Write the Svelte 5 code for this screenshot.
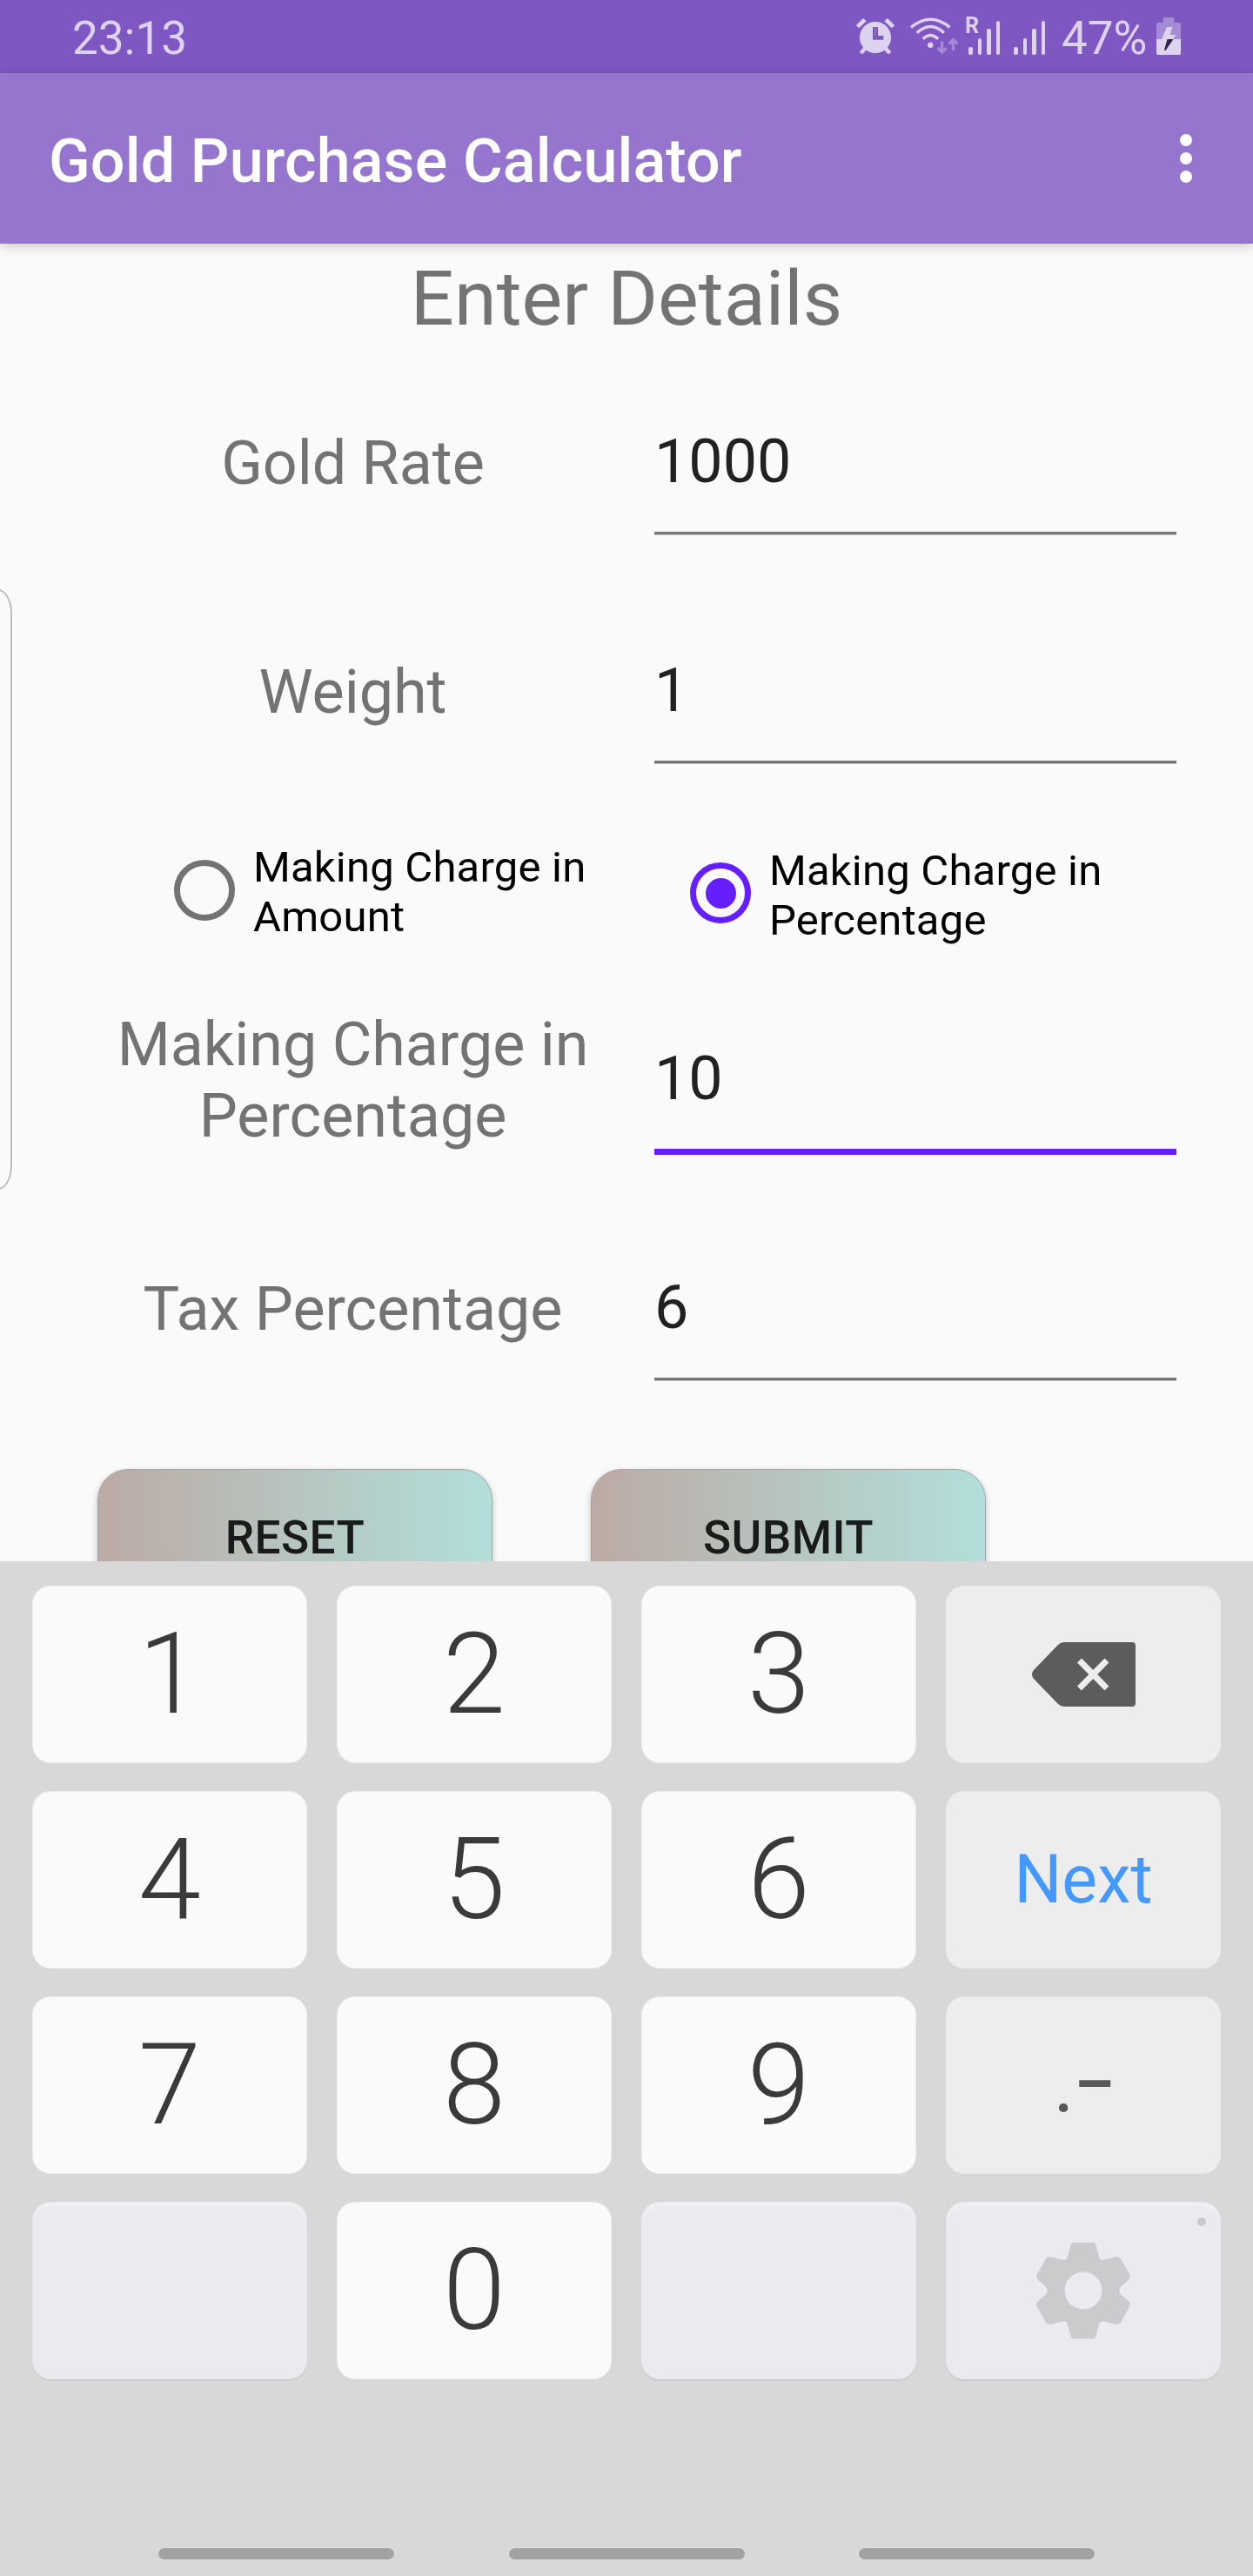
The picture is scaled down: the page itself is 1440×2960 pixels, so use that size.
<script>
  let goldRate = '1000';
  let weight = '1';
  let chargeType = 'percentage';
  let makingCharge = '10';
  let tax = '6';

  const barHeights = [9, 19, 30, 39];

  const keys = [
    { label: '1' },
    { label: '2' },
    { label: '3' },
    { type: 'backspace' },
    { label: '4' },
    { label: '5' },
    { label: '6' },
    { type: 'next' },
    { label: '7' },
    { label: '8' },
    { label: '9' },
    { type: 'symbols' },
    { type: 'blank' },
    { label: '0' },
    { type: 'blank' },
    { type: 'settings' },
  ];

  const press = (key) => {
    if (key.label) {
      makingCharge += key.label;
    } else if (key.type === 'backspace') {
      makingCharge = makingCharge.slice(0, -1);
    }
  };

  const reset = () => {
    goldRate = '';
    weight = '';
    makingCharge = '';
    tax = '';
  };
</script>

<div class="screen">
  <header class="status-bar">
    <span class="time">23:13</span>
    <div class="status-icons">
      <svg class="alarm" width="46" height="48" viewBox="0 0 46 48">
        <circle cx="23" cy="25" r="18" />
        <path d="M.7 11.3 9 3l3.7 3.3-8.4 8zM45.3 11.3 37 3l-3.7 3.3 8.4 8z" />
        <path class="line" d="M12 37l-5.6 6M34 37l5.6 6" stroke-width="4.6" />
        <path class="cut" d="M20 13h6v10h6.3v4.8H20z" />
        <path d="M22.3 14h1.2v9h-1.2z" opacity=".25" />
      </svg>
      <svg class="wifi" width="57" height="48" viewBox="0 0 57 48">
        <path class="line" d="M2 13.4Q24.3-4.8 46.6 13.4M8.8 19.8Q24.3 5.3 40 19.8M15.6 26.8Q24.3 18.4 33.2 26.8" stroke-width="3.3" />
        <circle cx="24.3" cy="33.8" r="3.2" />
        <path class="faint" d="M37.6 29.6V42M32.8 37.2l4.8 5 4.8-5M50.4 40V27.5M45.4 32.6l5-5 5 5" stroke-width="3.2" />
      </svg>
      <div class="signal">
        <span class="roaming">R</span>
        {#each barHeights as h}
          <i style="height: {h}px"></i>
        {/each}
      </div>
      <div class="signal second">
        {#each barHeights as h}
          <i style="height: {h}px"></i>
        {/each}
      </div>
      <span class="percent">47%</span>
      <svg class="battery" width="28" height="43" viewBox="0 0 28 43">
        <path d="M9 0h10q1.500 0 1.500 1.500V6H26q2 0 2 2v17H0V8q0-2 2-2h5.500V1.500Q7.500 0 9 0z" fill="#a58bd5" />
        <path d="M0 25h28v16q0 2-2 2H2q-2 0-2-2z" />
        <path d="M12 11h6.500l-2.800 9h6.800l-3.500 5H6z" />
        <path d="M12.500 25h7L10.500 38 9 37.500z" fill="#2d2440" />
      </svg>
    </div>
  </header>

  <div class="app-bar">
    <h1>Gold Purchase Calculator</h1>
    <button class="more" aria-label="More options">
      <i></i><i></i><i></i>
    </button>
  </div>

  <main class="form">
    <h2>Enter Details</h2>

    <div class="row">
      <label for="goldRate">Gold Rate</label>
      <input id="goldRate" type="text" bind:value={goldRate} />
    </div>

    <div class="row">
      <label for="weight">Weight</label>
      <input id="weight" type="text" bind:value={weight} />
    </div>

    <div class="radios">
      <button class="radio" on:click={() => (chargeType = 'amount')}>
        <span class="circle" class:checked={chargeType === 'amount'}></span>
        <span class="radio-text">Making Charge in<br />Amount</span>
      </button>
      <button class="radio lower" on:click={() => (chargeType = 'percentage')}>
        <span class="circle" class:checked={chargeType === 'percentage'}></span>
        <span class="radio-text">Making Charge in<br />Percentage</span>
      </button>
    </div>

    <div class="row making">
      <label for="makingCharge">Making Charge in<br />{chargeType === 'amount' ? 'Amount' : 'Percentage'}</label>
      <input id="makingCharge" class="active" type="text" bind:value={makingCharge} />
    </div>

    <div class="row tax">
      <label for="tax">Tax Percentage</label>
      <input id="tax" type="text" bind:value={tax} />
    </div>

    <div class="actions">
      <button on:click={reset}>RESET</button>
      <button>SUBMIT</button>
    </div>
  </main>

  <div class="edge-handle"></div>

  <section class="keyboard">
    <div class="keys">
      {#each keys as key}
        <button class="key {key.type || 'digit'}" on:click={() => press(key)} aria-label={key.label || key.type}>
          {#if key.label}
            {key.label}
          {:else if key.type === 'backspace'}
            <svg width="119" height="74" viewBox="0 0 119 74">
              <path d="M37 0h78q4 0 4 4v66q0 4-4 4H37q-4 0-7-3L2 42q-4-5 0-10L30 3q3-3 7-3z" fill="#5c5c5c" />
              <path d="M54.500 21 86 53M86 21 54.500 53" stroke="#ededed" stroke-width="7" />
            </svg>
          {:else if key.type === 'next'}
            Next
          {:else if key.type === 'symbols'}
            <span class="dot">.</span><span class="dash">-</span>
          {:else if key.type === 'settings'}
            <svg width="110" height="112" viewBox="-55 -56 110 112">
              <path
                fill="#cacbcd"
                fill-rule="evenodd"
                d="M-10.500-55.300H10.500Q14-55.300 14.700-51.500L18-39Q19.500-34 24-35.500L37-38.600Q41-39.500 43-36.500L53-19Q54.500-16 52.500-12.500L42.500-4Q40.500 0 42.500 4L52.500 12.500Q54.500 16 53 19L43 36.500Q41 39.500 37 38.600L24 35.500Q19.500 34 18 39L14.700 51.500Q14 55.300 10.500 55.300H-10.500Q-14 55.300-14.700 51.500L-18 39Q-19.500 34-24 35.500L-37 38.600Q-41 39.500-43 36.500L-53 19Q-54.500 16-52.500 12.500L-42.500 4Q-40.500 0-42.500-4L-52.500-12.500Q-54.500-16-53-19L-43-36.500Q-41-39.500-37-38.600L-24-35.500Q-19.500-34-18-39L-14.700-51.500Q-14-55.300-10.500-55.300zM21.500 0a21.500 21.500 0 1 0-43 0a21.500 21.500 0 1 0 43 0z"
              />
            </svg>
            <i class="badge"></i>
          {/if}
        </button>
      {/each}
    </div>
    <nav class="nav-hints">
      <i></i><i></i><i></i>
    </nav>
  </section>
</div>

<style>
  :global(body) {
    margin: 0;
  }

  .screen {
    position: relative;
    display: flex;
    flex-direction: column;
    width: 1440px;
    height: 2960px;
    overflow: hidden;
    background: #fafafa;
    font-family: Roboto, sans-serif;
  }

  button {
    margin: 0;
    padding: 0;
    border: none;
    background: none;
    font-family: inherit;
    cursor: pointer;
  }

  .status-bar {
    display: flex;
    justify-content: space-between;
    height: 84px;
    box-sizing: border-box;
    padding: 0 83px 0 83px;
    background: #7e57c2;
    color: #ddd3ef;
  }

  .time,
  .percent {
    font-size: 53px;
    line-height: 88px;
  }

  .status-icons {
    display: flex;
    align-items: flex-start;
  }

  .status-icons svg {
    margin-top: 18px;
    fill: #ddd3ef;
  }

  .status-icons .line {
    fill: none;
    stroke: #ddd3ef;
  }

  .status-icons .cut {
    fill: #7e57c2;
  }

  .status-icons .faint {
    fill: none;
    stroke: #a58bd5;
  }

  .wifi {
    margin-left: 16px;
  }

  .signal {
    position: relative;
    display: flex;
    align-items: flex-end;
    gap: 6px;
    height: 63px;
    margin-left: 11px;
  }

  .signal.second {
    margin-left: 16px;
  }

  .signal i {
    width: 4.500px;
    border-radius: 2px;
    background: #ddd3ef;
  }

  .roaming {
    position: absolute;
    left: -4px;
    top: 15px;
    font-size: 25px;
    font-weight: 700;
    line-height: 29px;
  }

  .percent {
    width: 97px;
    margin-left: 19px;
    white-space: nowrap;
  }

  .status-icons .battery {
    margin-top: 20px;
    margin-left: 12px;
  }

  .app-bar {
    position: relative;
    z-index: 1;
    display: flex;
    align-items: center;
    justify-content: space-between;
    height: 196px;
    box-sizing: border-box;
    padding: 0 70px 0 56px;
    background: #9575cd;
    box-shadow: 0 3px 12px rgba(0, 0, 0, 0.2);
  }

  .app-bar h1 {
    margin: 0;
    padding-top: 6px;
    color: #fff;
    font-size: 70px;
    font-weight: 500;
    letter-spacing: 0.15px;
    line-height: 82px;
  }

  .more {
    display: flex;
    flex-direction: column;
    gap: 7px;
  }

  .more i {
    width: 14px;
    height: 14px;
    border-radius: 50%;
    background: #fff;
  }

  .form {
    height: 1514px;
    overflow: hidden;
  }

  .form h2 {
    margin: 0;
    color: #737373;
    font-size: 88px;
    font-weight: 400;
    letter-spacing: 0.1px;
    line-height: 126px;
    text-align: center;
  }

  .row {
    display: grid;
    grid-template-columns: 693px 600px;
    align-items: start;
    height: 263px;
    padding-left: 59px;
  }

  .row label {
    padding-top: 85px;
    color: #737373;
    font-size: 70px;
    line-height: 82px;
    text-align: center;
  }

  .row input {
    height: 125px;
    box-sizing: border-box;
    margin: 83px 0 0;
    padding: 0 0 40px;
    border: none;
    border-bottom: 3px solid #757575;
    border-radius: 0;
    outline: none;
    background: transparent;
    box-shadow: 0 1px 0 #bbb;
    color: #212121;
    font-family: inherit;
    font-size: 70px;
    line-height: 82px;
  }

  .radios {
    display: grid;
    grid-template-columns: 593px 1fr;
    align-items: start;
    height: 190px;
    padding-left: 200px;
  }

  .radio {
    display: flex;
    align-items: flex-start;
    gap: 21px;
    padding-top: 36px;
    text-align: left;
  }

  .radio.lower {
    padding-top: 40px;
  }

  .circle {
    display: flex;
    align-items: center;
    justify-content: center;
    width: 70px;
    height: 70px;
    box-sizing: border-box;
    margin-top: 20px;
    border: 7px solid #737373;
    border-radius: 50%;
  }

  .radio.lower .circle {
    margin-top: 19px;
  }

  .circle.checked {
    border-color: #651fff;
  }

  .circle.checked::after {
    content: '';
    width: 35px;
    height: 35px;
    border-radius: 50%;
    background: #651fff;
  }

  .radio-text {
    color: #000;
    font-size: 49px;
    letter-spacing: 0.2px;
    line-height: 57px;
  }

  .row.making {
    height: 256px;
  }

  .row.making label {
    padding-top: 37px;
  }

  .row.making input {
    height: 129px;
    margin-top: 76px;
    border-bottom: 7px solid #651fff;
    box-shadow: none;
  }

  .row.tax {
    height: 310px;
  }

  .actions {
    display: flex;
    gap: 113px;
    padding-left: 112px;
  }

  .actions button {
    width: 454px;
    height: 158px;
    box-sizing: border-box;
    border: 1px solid #a3a5a4;
    border-radius: 35px;
    background: linear-gradient(90deg, #bcaaa4, #b2dfdb);
    box-shadow: 0 3px 7px rgba(0, 0, 0, 0.25);
    color: #191b1a;
    font-size: 53px;
    font-weight: 500;
    letter-spacing: 0.5px;
    line-height: 156px;
  }

  /* pull-out panel peeking from the left side of the screen */
  .edge-handle {
    position: absolute;
    left: -40px;
    top: 677px;
    width: 54px;
    height: 690px;
    box-sizing: border-box;
    border: 2px solid #bdbdbd;
    border-radius: 16px / 28px;
  }

  .keyboard {
    display: flex;
    flex-direction: column;
    justify-content: space-between;
    flex: 1;
    box-sizing: border-box;
    padding: 28px 37px 19px;
    background: #d8d8d8;
  }

  .keys {
    display: grid;
    grid-template-columns: repeat(4, 316px);
    grid-auto-rows: 204px;
    gap: 32px 34px;
  }

  .key {
    position: relative;
    display: flex;
    align-items: center;
    justify-content: center;
    box-sizing: border-box;
    border: 1px solid #e8e8e8;
    border-radius: 21px;
    background: #ededed;
  }

  .key.digit {
    border-color: #eee;
    background: #fafafa;
    color: #3a3a3a;
    font-size: 129.5px;
    font-weight: 300;
  }

  .key.next {
    color: #4499ff;
    font-size: 77px;
  }

  .key.symbols {
    align-items: baseline;
    padding: 0 7px 10px 0;
    color: #585858;
    line-height: 192px;
  }

  .dot {
    margin-right: 9px;
    font-size: 92px;
  }

  .dash {
    display: inline-block;
    font-size: 104px;
    transform: scaleX(1.45);
  }

  .key.blank,
  .key.settings {
    border-color: #e5e7ea;
    background: #e9ebee;
    box-shadow: inset 0 4px 3px #f0f1f2, 0 2px 0 #cdced0;
  }

  .badge {
    position: absolute;
    top: 17px;
    right: 16px;
    width: 10px;
    height: 10px;
    border-radius: 50%;
    background: #cacbcd;
  }

  .nav-hints {
    display: flex;
    justify-content: center;
    gap: 131.5px;
  }

  .nav-hints i {
    width: 271px;
    height: 13px;
    border-radius: 7px;
    background: #a2a2a2;
    box-shadow: 0 0 0 1px #dedede;
  }
</style>
